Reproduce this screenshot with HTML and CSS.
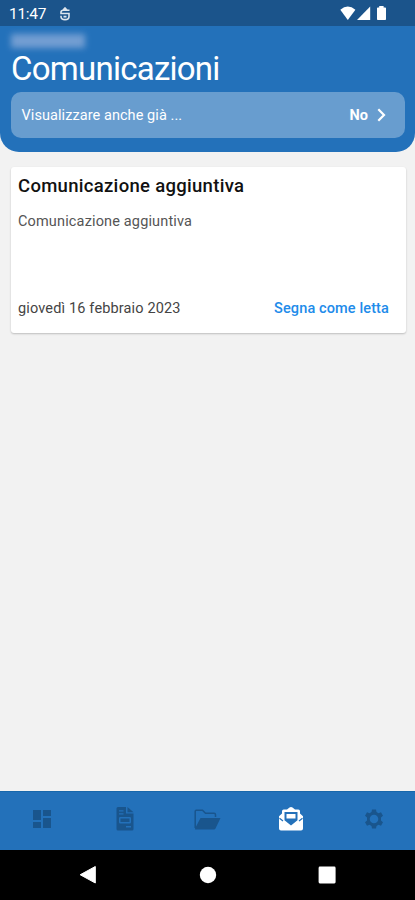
FILE: index.html
```html
<!DOCTYPE html>
<html lang="it">
<head>
<meta charset="utf-8">
<meta name="viewport" content="width=device-width, initial-scale=1">
<title>Comunicazioni</title>
<link rel="stylesheet" href="styles.css">
</head>
<body>
<div class="screen">
  <div class="status">
    <span class="clock">11:47</span>
    <svg class="notif" width="12" height="14" viewBox="0 0 12 14" fill="none" stroke="currentColor" stroke-width="1.600"><path d="M10.500 3.200H4.500Q2 3.200 2 5V6.500H10V9.500Q10 12.600 6 12.600Q2 12.600 2 9.500V8.800M4.500 9.600H7.500M4 3L6 1L8 3"/></svg>
    <svg class="signals" width="48" height="16" viewBox="0 0 48 16" fill="currentColor"><path d="M0.300 3.700Q7.800-2.600 15.400 3.700L7.800 14Z"/><path d="M30.200 0.500V14H17Z"/><path d="M39.200 1.400V0H43.600V1.400H45.200Q46 1.400 46 2.200V13.200Q46 14 45.200 14H37.800Q37 14 37 13.200V2.200Q37 1.400 37.800 1.400Z"/></svg>
  </div>
  <header class="header">
    <div class="account"><span class="account-name"></span></div>
    <h1>Comunicazioni</h1>
    <div class="filter">
      <span class="filter-label">Visualizzare anche già ...</span>
      <span class="filter-value">No</span>
      <svg width="9" height="14" viewBox="0 0 9 14" fill="none" stroke="currentColor" stroke-width="2.200"><path d="M1.300 1.300L7 7L1.300 12.700"/></svg>
    </div>
  </header>
  <main class="content">
    <article class="card">
      <h2>Comunicazione aggiuntiva</h2>
      <p>Comunicazione aggiuntiva</p>
      <footer><span class="date">giovedì 16 febbraio 2023</span><a class="action">Segna come letta</a></footer>
    </article>
  </main>
  <nav class="tabs">
    <span class="tab"><svg width="18" height="18" viewBox="0 0 18 18" fill="currentColor"><path d="M0 0H8V10H0ZM10 0H18V6H10ZM10 8H18V18H10ZM0 12H8V18H0Z"/></svg></span>
    <span class="tab"><svg width="18" height="24" viewBox="0 0 18 24" fill="currentColor" fill-rule="evenodd"><path d="M2 0H10V6.500H17.500V22Q17.500 23.500 16 23.500H2Q.5 23.500 .5 22V1.500Q.5 0 2 0ZM3 3.300V4.600H7.500V3.300ZM3 6.300V7.600H7.500V6.300ZM4.300 10Q3 10 3 11.300V15.200Q3 16.500 4.300 16.500H13.700Q15 16.500 15 15.200V11.300Q15 10 13.700 10ZM4.500 11.500H13.500V15H4.500ZM10 19V20.400H15V19Z"/><path d="M11.500 0L17.500 5.200H11.500Z"/></svg></span>
    <span class="tab"><svg width="27" height="21" viewBox="0 0 27 21"><path d="M1.200 19V2.200Q1.200 1.200 2.200 1.200H8.500L11.500 4.200H20Q21.500 4.200 21.500 5.700V8" fill="none" stroke="currentColor" stroke-width="1.500"/><path d="M6.500 9H26.500L21.500 19.500Q21 20.500 20 20.500H1.500Q.5 20.500 1 19.400Z" fill="currentColor"/></svg></span>
    <span class="tab active"><svg width="26" height="24" viewBox="0 0 26 24" fill="currentColor" fill-rule="evenodd"><path d="M1 9.200L4 6.600V4.200Q4 2.500 5.700 2.500H9L11.500.5Q13 -.4 14.500 .5L17 2.500H20.300Q22 2.500 22 4.200V6.600L25 9.200V21.500Q25 23.500 23 23.500H3Q1 23.500 1 21.500ZM6.500 5V13.200L13 18.500L19.500 13.200V5Z"/><path d="M8.500 7H17.500V11.500H8.500Z"/><path d="M1.500 11.200L5 14M24.500 11.200L21 14" stroke="#2371ba" stroke-width="1.200"/></svg></span>
    <span class="tab"><svg width="20" height="20" viewBox="2 2 20 20" fill="currentColor"><path fill-rule="evenodd" d="M10 2.500H14L14.500 5L16.500 6.200L19 5.300L21 8.800L19 10.600V13.400L21 15.200L19 18.700L16.500 17.800L14.500 19L14 21.500H10L9.500 19L7.500 17.800L5 18.700L3 15.200L5 13.400V10.600L3 8.800L5 5.300L7.500 6.200L9.500 5ZM12 7.700A4.300 4.300 0 1 0 12 16.300A4.300 4.300 0 1 0 12 7.700Z"/></svg></span>
  </nav>
  <div class="system">
    <svg width="18" height="20" viewBox="0 0 18 20" fill="currentColor"><path d="M16.300 1.500V18L1.200 9.750Z" stroke="currentColor" stroke-linejoin="round"/></svg>
    <svg width="18" height="18" viewBox="0 0 18 18" fill="currentColor"><circle cx="9" cy="9" r="8.200"/></svg>
    <svg width="18" height="18" viewBox="0 0 18 18" fill="currentColor"><rect x=".6" y=".6" width="17" height="16.800" rx="1.300"/></svg>
  </div>
</div>
</body>
</html>
```
FILE: styles.css
```css
* { box-sizing: border-box; }
body { margin: 0; font-family: Roboto, sans-serif; background: #f2f2f2; }
svg { display: block; flex: none; }
h1, h2, p { margin: 0; font-weight: 400; white-space: nowrap; }
.screen { display: flex; flex-direction: column; height: 900px; }
.status { display: flex; align-items: center; height: 26px; padding: 1px 27px 0 9px; background: #1b548b; color: #fff; }
.clock { width: 50px; font-size: 15.500px; letter-spacing: -.3px; }
.notif { opacity: .85; }
.signals { margin-left: auto; }
.header { height: 126px; padding: 6px 10px 14px 11px; background: #2371ba; border-radius: 0 0 19px 19px; color: #fff; }
.account { height: 18px; padding-top: 2px; }
.account-name { display: block; width: 74px; height: 14px; background: #87a9d8; opacity: .8; filter: blur(3px); }
h1 { height: 42px; font-size: 33px; line-height: 37px; letter-spacing: -.75px; }
.filter { display: flex; align-items: center; height: 46px; padding: 0 19px 0 10.500px; border-radius: 10px; background: #689dcf; font-size: 14.500px; }
.filter-label { letter-spacing: .07px; }
.filter-value { margin-left: auto; margin-right: 9px; font-weight: 700; }
.content { flex: 1; padding: 15px 9px 0 11px; }
.card { display: flex; flex-direction: column; height: 166px; padding: 8px 17px 15px 7px; border-radius: 3px; background: #fff; box-shadow: 0 1px 2px rgba(0, 0, 0, .22); }
h2 { font-size: 18.500px; line-height: 23px; font-weight: 500; letter-spacing: .3px; color: #111; }
p { margin-top: 15px; font-size: 14.500px; line-height: 18px; letter-spacing: .15px; color: #555; }
footer { display: flex; justify-content: space-between; margin-top: auto; font-size: 14.500px; line-height: 18px; letter-spacing: .15px; color: #444; }
.action { color: #218bea; font-weight: 500; letter-spacing: .12px; }
.tabs { display: flex; height: 59px; border-top: 1px solid #1767ab; background: #2371ba; color: #19558d; }
.tab { display: flex; flex: 1; align-items: center; justify-content: center; padding-bottom: 4px; }
.active { color: #fff; }
.system { display: flex; align-items: center; gap: 101.500px; height: 50px; padding-left: 79px; background: #000; color: #fff; }
```
